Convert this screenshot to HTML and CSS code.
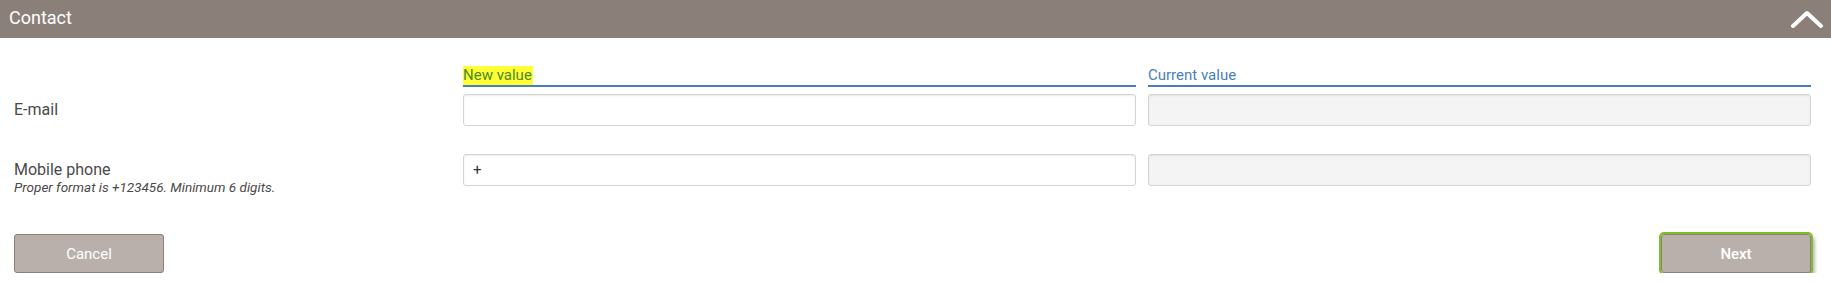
FILE: index.html
```html
<!DOCTYPE html>
<html lang="en">
<head>
	<meta charset="UTF-8">
	<title>Contact</title>
	<link rel="stylesheet" href="styles.css">
</head>
<body>
	<div class="panel">
		<div class="panel-head">
			<span class="panel-title">Contact</span>
			<svg class="toggle" width="32" height="20" viewBox="0 0 32 20">
				<polyline points="2,17 16,4 30,17" fill="none" stroke="#fff" stroke-width="4" stroke-linecap="round" stroke-linejoin="round"/>
			</svg>
		</div>

		<form class="panel-body" action="post">
			<div class="row">
				<div></div>
				<div class="col-head"><span class="mark">New value</span></div>
				<div class="col-head current">Current value</div>
			</div>

			<div class="row entry">
				<label class="field-label">E-mail</label>
				<input type="text" class="field">
				<input type="text" class="field readonly" disabled>
			</div>

			<div class="row entry second">
				<div class="field-label">
					<label>Mobile phone</label>
					<div class="hint">Proper format is +123456. Minimum 6 digits.</div>
				</div>
				<input type="text" class="field" value="+">
				<input type="text" class="field readonly" disabled>
			</div>

			<div class="actions">
				<button type="button" class="btn">Cancel</button>
				<button type="button" class="btn active">Next</button>
			</div>
		</form>
	</div>
</body>
</html>
```

FILE: styles.css
```css
* {
	padding: 0;
	margin: 0;
	box-sizing: border-box;
}

body {
	font-family: Roboto, "Liberation Sans", sans-serif;
	color: #555;
	background: #fff;
}

.panel-head {
	height: 38px;
	background: #8a7f79;
	display: flex;
	align-items: center;
	justify-content: space-between;
	padding: 0 8px 0 9px;
}

.panel-title {
	color: #fff;
	font-size: 18px;
	line-height: 38px;
	margin-top: -3px;
}

.toggle {
	display: block;
	margin-top: -1px;
}

.panel-body {
	padding: 27px 20px 0 14px;
}

.row {
	display: grid;
	grid-template-columns: 437px 673px 1fr;
	column-gap: 12px;
}

.col-head {
	font-size: 15px;
	line-height: 20px;
	border-bottom: 2px solid #4a7fb6;
	color: #4a7fb6;
}

.col-head .mark {
	background: #ffff33;
	color: #4d8a2c;
	padding: 0 1px 0 0;
	display: inline-block;
	line-height: 19px;
}

.entry {
	margin-top: 7px;
	align-items: start;
}

.entry.second {
	margin-top: 28px;
}

.field-label {
	font-size: 16px;
	line-height: 20px;
	padding-top: 6px;
	color: #4a4a4a;
}

.hint {
	font-size: 13.5px;
	line-height: 15px;
	font-style: italic;
	color: #4a4a4a;
}

.field {
	height: 32px;
	border: 1px solid #d4d4d4;
	border-radius: 3px;
	box-shadow: inset 0 1px 2px rgba(0, 0, 0, .08);
	padding: 0 9px;
	font-family: Roboto, "Liberation Sans", sans-serif;
	font-size: 15px;
	color: #333;
	background: #fff;
	outline: none;
}

.field.readonly {
	background: #f4f4f4;
}

.actions {
	display: flex;
	justify-content: space-between;
	margin-top: 39px;
}

.btn {
	width: 150px;
	height: 39px;
	background: #b9b0ac;
	border: 1px solid #8a7f79;
	border-radius: 3px;
	color: #fff;
	font-family: Roboto, "Liberation Sans", sans-serif;
	font-size: 15px;
}

.btn.active {
	font-weight: 500;
	outline: 2px solid #7fbf22;
	box-shadow: 3px 3px 4px rgba(0, 0, 0, .4);
}
```
